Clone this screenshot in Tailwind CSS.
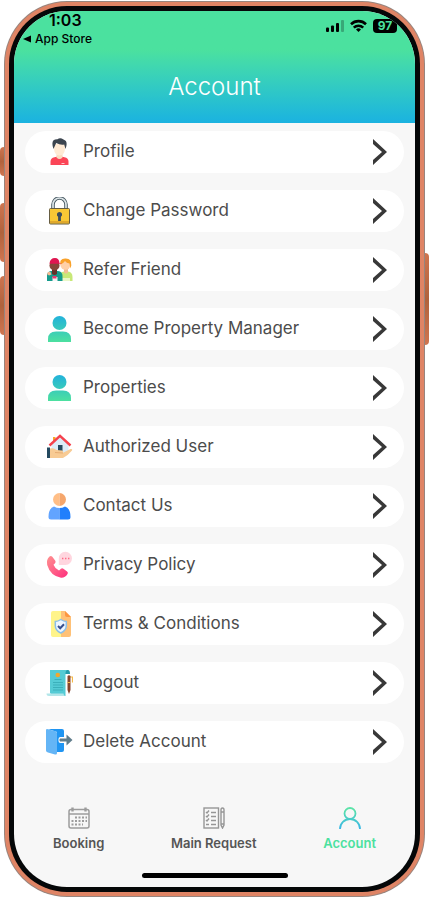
<!DOCTYPE html>
<html lang="en">
<head>
    <meta charset="UTF-8">
    <meta name="viewport" content="width=device-width, initial-scale=1.0" />
    <title>Account</title>
    <script src="https://cdn.jsdelivr.net/npm/@tailwindcss/browser@4"></script>
</head>
<body class="bg-white font-['Inter','Liberation_Sans',sans-serif]">
    <div class="relative min-h-screen flex flex-col pl-1 pr-[5px] py-px">
        <!-- Side buttons -->
        <div class="absolute left-0 top-[147px] w-[5px] h-[29px] rounded-l-sm bg-linear-to-b from-[#cf7550] via-[#b0623c] to-[#cf7550]"></div>
        <div class="absolute left-0 top-[203px] w-[5px] h-[59px] rounded-l-sm bg-linear-to-b from-[#cf7550] via-[#b0623c] to-[#cf7550]"></div>
        <div class="absolute left-0 top-[276px] w-[5px] h-[59px] rounded-l-sm bg-linear-to-b from-[#cf7550] via-[#b0623c] to-[#cf7550]"></div>
        <div class="absolute right-px top-[253px] w-[5px] h-[92px] rounded-r-sm bg-linear-to-b from-[#cf7550] via-[#b0623c] to-[#cf7550]"></div>

        <!-- Phone frame -->
        <div class="relative grow flex flex-col rounded-[63px] bg-[#98857e] p-px">
            <div class="grow flex flex-col rounded-[62px] bg-[#df8465] p-1">
                <div class="grow flex flex-col rounded-[58px] bg-[#050708] p-[5px]">
                    <div class="grow flex flex-col rounded-[53px] overflow-hidden bg-[#f7f7f7]">

                        <header class="bg-linear-to-b from-[#4be19f] from-35% to-[#1bb2e0] pb-5">
                            <div class="flex justify-between">
                                <div class="pl-[9px] text-black">
                                    <div class="pl-[26px] text-base leading-[18px] font-semibold">1:03</div>
                                    <a href="#" class="mt-0.5 flex items-center gap-1 text-xs leading-4 font-medium">
                                        <svg class="w-2 h-2" viewBox="0 0 8 8"><path d="M0 4L8 .5v7z"/></svg>
                                        App Store
                                    </a>
                                </div>
                                <div class="flex items-start gap-1.5 pt-2 pr-[18px]">
                                    <svg class="w-[18px] h-[13px]" viewBox="0 0 18 13">
                                        <rect x="0" y="8.5" width="3" height="4.5" rx="1"/>
                                        <rect x="5" y="6.5" width="3" height="6.5" rx="1"/>
                                        <rect x="10" y="4" width="3" height="9" rx="1"/>
                                        <rect x="15" y="1" width="3" height="12" rx="1" opacity=".25"/>
                                    </svg>
                                    <svg class="w-[17px] h-[13px]" viewBox="0 0 17 13" fill="none" stroke="#000" stroke-width="2.6">
                                        <path d="M1 5.2a10.8 10.8 0 0 1 15 0"/>
                                        <path d="M3.8 8.6a6.8 6.8 0 0 1 9.4 0"/>
                                        <path d="M8.500 13L6 10.500a3.500 3.500 0 0 1 5 0z" fill="#000" stroke="none"/>
                                    </svg>
                                    <div class="w-6 h-[14px] rounded bg-black text-[#4be19f] text-xs leading-[14px] font-bold text-center">97</div>
                                </div>
                            </div>
                            <h1 class="mt-6 text-center text-2xl leading-8 font-light text-white">Account</h1>
                        </header>

                        <main class="px-[11px] pt-2 pb-4">
                            <ul class="flex flex-col gap-[17px] text-[17px] text-[#4c4c4c]">
                                <li>
                                    <a href="#" class="flex items-center gap-2.5 h-[42px] rounded-full bg-white pl-5 pr-[17px]">
                                        <svg class="w-7 h-7" viewBox="0 0 28 28">
                                            <path d="M5.500 27v-3.500q0-3.500 4-4.200l5-1.300 5 1.300q4 .7 4 4.200V27z" fill="#fb4557"/>
                                            <path d="M11.500 15h6v4.500q-3 3-6 0z" fill="#f9dcc0"/>
                                            <path d="M9 6h11v5q-.5 6-5.500 6.500Q9.500 17 9 11z" fill="#ffead4"/>
                                            <path d="M8.500 11Q5 1 12.500 1.300 15-.8 18.500 1.500 23.500 3 20.500 11l-1.300-4.500q-4 .7-8-1.500z" fill="#3c454f"/>
                                            <path d="M16.500 25.500h3" stroke="#ffc5c8"/>
                                        </svg>
                                        <span class="grow">Profile</span>
                                        <svg class="w-[14px] h-[26px]" viewBox="0 0 14 26"><path d="M0 0v5l9 8-9 8v5l14-13z" fill="#383838"/></svg>
                                    </a>
                                </li>
                                <li>
                                    <a href="#" class="flex items-center gap-2.5 h-[42px] rounded-full bg-white pl-5 pr-[17px]">
                                        <svg class="w-7 h-7" viewBox="0 0 28 28">
                                            <path d="M8 12V7.500a6.500 6.500 0 0 1 13 0V12" fill="none" stroke="#4c5d66" stroke-width="3.600"/>
                                            <path d="M8 12V7.500a6.500 6.500 0 0 1 13 0V12" fill="none" stroke="#dce4e7" stroke-width="1.700"/>
                                            <rect x="4.500" y="11.500" width="20" height="15.500" rx="1" fill="#f9c835" stroke="#665d43"/>
                                            <path d="M5 25h19" stroke="#e0a92c" stroke-width="2"/>
                                            <path d="M14.500 15a2.600 2.600 0 0 1 1.400 4.800V24h-2.800v-4.200a2.600 2.600 0 0 1 1.400-4.800z" fill="#3e4e5b"/>
                                        </svg>
                                        <span class="grow">Change Password</span>
                                        <svg class="w-[14px] h-[26px]" viewBox="0 0 14 26"><path d="M0 0v5l9 8-9 8v5l14-13z" fill="#383838"/></svg>
                                    </a>
                                </li>
                                <li>
                                    <a href="#" class="flex items-center gap-2.5 h-[42px] rounded-full bg-white pl-5 pr-[17px]">
                                        <svg class="w-7 h-7" viewBox="0 0 28 28">
                                            <path d="M15 25v-6q0-3 4-3.500h4q4.500.5 4.500 5.500v4z" fill="#c8e878"/>
                                            <path d="M17 22h8v3h-8z" fill="#eaf7c7"/>
                                            <path d="M19 13h4v3.500q-2 2-4 0z" fill="#f3bc93"/>
                                            <circle cx="20.500" cy="8.500" r="5.200" fill="#ffd0a8"/>
                                            <path d="M15.500 8.500Q14 3 20 2.500q7-.5 6.300 7l-1 3-.8-5q-3-.5-4.500-2.500-1.500 2-4.500 3.500z" fill="#f9a22b"/>
                                            <path d="M2 25v-5.500q0-4 4-4.500h7q4.500.5 4.500 5V25z" fill="#159b8c"/>
                                            <path d="M2 18q1-3 3.500-2l1 2.500-2.500 1z" fill="#f6b992"/>
                                            <path d="M7.500 21h5v4h-5z" fill="#f4f4f4"/>
                                            <path d="M7.500 20h4v2.500h-4z" fill="#eb386c"/>
                                            <path d="M7 13h5v5q-2.500 2-5 0z" fill="#653129"/>
                                            <circle cx="9.500" cy="9.500" r="5" fill="#854638"/>
                                            <path d="M4.500 7.500Q5 2 10 2q4 0 4.500 5l2.500.8H4.500z" fill="#df1650"/>
                                        </svg>
                                        <span class="grow">Refer Friend</span>
                                        <svg class="w-[14px] h-[26px]" viewBox="0 0 14 26"><path d="M0 0v5l9 8-9 8v5l14-13z" fill="#383838"/></svg>
                                    </a>
                                </li>
                                <li>
                                    <a href="#" class="flex items-center gap-2.5 h-[42px] rounded-full bg-white pl-5 pr-[17px]">
                                        <svg class="w-7 h-7" viewBox="0 0 28 28">
                                            <defs>
                                                <linearGradient id="userFill" gradientUnits="userSpaceOnUse" x1="0" y1="1" x2="0" y2="27">
                                                    <stop offset="0" stop-color="#22b2db"/>
                                                    <stop offset="1" stop-color="#4de09f"/>
                                                </linearGradient>
                                            </defs>
                                            <circle cx="14.500" cy="8" r="7" fill="url(#userFill)"/>
                                            <path d="M3 27v-3q0-7.500 8-7.500h7q8 0 8 7.500v3z" fill="url(#userFill)"/>
                                        </svg>
                                        <span class="grow">Become Property Manager</span>
                                        <svg class="w-[14px] h-[26px]" viewBox="0 0 14 26"><path d="M0 0v5l9 8-9 8v5l14-13z" fill="#383838"/></svg>
                                    </a>
                                </li>
                                <li>
                                    <a href="#" class="flex items-center gap-2.5 h-[42px] rounded-full bg-white pl-5 pr-[17px]">
                                        <svg class="w-7 h-7" viewBox="0 0 28 28">
                                            <circle cx="14.500" cy="8" r="7" fill="url(#userFill)"/>
                                            <path d="M3 27v-3q0-7.500 8-7.500h7q8 0 8 7.500v3z" fill="url(#userFill)"/>
                                        </svg>
                                        <span class="grow">Properties</span>
                                        <svg class="w-[14px] h-[26px]" viewBox="0 0 14 26"><path d="M0 0v5l9 8-9 8v5l14-13z" fill="#383838"/></svg>
                                    </a>
                                </li>
                                <li>
                                    <a href="#" class="flex items-center gap-2.5 h-[42px] rounded-full bg-white pl-5 pr-[17px]">
                                        <svg class="w-7 h-7" viewBox="0 0 28 28">
                                            <path d="M8 4h2.500v6H8z" fill="#f6a928"/>
                                            <path d="M6.500 11.500L15 3.500l8.500 8V21h-17z" fill="#dcecf8"/>
                                            <path d="M13 12h4.500v6H13z" fill="#264a5f"/>
                                            <path d="M4.500 12.500L15 2.800l10.500 9.700" fill="none" stroke="#f5424d" stroke-width="2.400"/>
                                            <path d="M5 15.500q4-1 6.500 1.500l6 .5q1.500 1.500 0 2.500l8-4q2.500-.5 1.500 1.500-4 5-9 7.500H5z" fill="#f8cb94"/>
                                            <path d="M10 19.500l8 .5" stroke="#e7ad73"/>
                                            <path d="M2 14.500h3V25H2z" fill="#24495f"/>
                                        </svg>
                                        <span class="grow">Authorized User</span>
                                        <svg class="w-[14px] h-[26px]" viewBox="0 0 14 26"><path d="M0 0v5l9 8-9 8v5l14-13z" fill="#383838"/></svg>
                                    </a>
                                </li>
                                <li>
                                    <a href="#" class="flex items-center gap-2.5 h-[42px] rounded-full bg-white pl-5 pr-[17px]">
                                        <svg class="w-7 h-7" viewBox="0 0 28 28">
                                            <path d="M14.500 1a6.500 6.500 0 0 0 0 13z" fill="#ffbe86"/>
                                            <path d="M14.500 1a6.500 6.500 0 0 1 0 13z" fill="#f5a66c"/>
                                            <path d="M9 14.500q2.500 1.500 5.500 1.500v11.500H6q-2.500 0-2.500-2.500 0-8.500 5.500-10.500z" fill="#62a4ff"/>
                                            <path d="M20 14.500q-2.500 1.500-5.500 1.500v11.500H23q2.500 0 2.500-2.500 0-8.500-5.500-10.500z" fill="#217ffc"/>
                                        </svg>
                                        <span class="grow">Contact Us</span>
                                        <svg class="w-[14px] h-[26px]" viewBox="0 0 14 26"><path d="M0 0v5l9 8-9 8v5l14-13z" fill="#383838"/></svg>
                                    </a>
                                </li>
                                <li>
                                    <a href="#" class="flex items-center gap-2.5 h-[42px] rounded-full bg-white pl-5 pr-[17px]">
                                        <svg class="w-7 h-7" viewBox="0 0 28 28">
                                            <defs>
                                                <linearGradient id="phoneFill" x1="0" y1="0" x2="1" y2="1">
                                                    <stop offset="0" stop-color="#ff9290"/>
                                                    <stop offset="1" stop-color="#fe2f7e"/>
                                                </linearGradient>
                                            </defs>
                                            <path d="M13.800 14V7.500A6.600 6.600 0 1 1 20.500 14z" fill="#ffd6df"/>
                                            <path d="M17 7.500h1.400M20 7.500h1.400M23 7.500h1.400" stroke="#ff6b86" stroke-width="1.400"/>
                                            <path d="M4.500 5.500q1.500-1.200 2.800.3l3 4q.8 1.300-.3 2.400l-1.500 1.600q1.500 4 5.500 5.700l2-1.700q1.100-.9 2.400 0l3.700 2.700q1.400 1.200.4 2.500-2.500 4-6.500 3.700Q5.500 25 2.200 14 1 8.500 4.500 5.500z" fill="url(#phoneFill)"/>
                                        </svg>
                                        <span class="grow">Privacy Policy</span>
                                        <svg class="w-[14px] h-[26px]" viewBox="0 0 14 26"><path d="M0 0v5l9 8-9 8v5l14-13z" fill="#383838"/></svg>
                                    </a>
                                </li>
                                <li>
                                    <a href="#" class="flex items-center gap-2.5 h-[42px] rounded-full bg-white pl-5 pr-[17px]">
                                        <svg class="w-7 h-7" viewBox="0 0 28 28">
                                            <path d="M8 1h8v26H8q-2 0-2-2V3q0-2 2-2z" fill="#fff48b"/>
                                            <path d="M16 1h4l6 6v18q0 2-2 2h-8z" fill="#ffc177"/>
                                            <path d="M20 1l6 6h-4q-2 0-2-2z" fill="#fd9641"/>
                                            <path d="M15.800 9.500q3 2 5.500 2v4q0 5-5.500 7.500-5.500-2.500-5.500-7.500v-4q2.500 0 5.500-2z" fill="#eef6ff" stroke="#8bbfe9" stroke-width="1.500"/>
                                            <path d="M13 16l2.200 2.200 3.800-4" fill="none" stroke="#38508f" stroke-width="2"/>
                                        </svg>
                                        <span class="grow">Terms &amp; Conditions</span>
                                        <svg class="w-[14px] h-[26px]" viewBox="0 0 14 26"><path d="M0 0v5l9 8-9 8v5l14-13z" fill="#383838"/></svg>
                                    </a>
                                </li>
                                <li>
                                    <a href="#" class="flex items-center gap-2.5 h-[42px] rounded-full bg-white pl-5 pr-[17px]">
                                        <svg class="w-7 h-7" viewBox="0 0 28 28">
                                            <path d="M19 1h4q2 0 2 4h-6z" fill="#269dad"/>
                                            <path d="M5 1h17q-1.500 1-1.500 3v23H8l-3-3z" fill="#55cbd5"/>
                                            <path d="M1.500 24.500h17q0 2 2 2.500H4q-2.500 0-2.500-2.500z" fill="#b2e6e9"/>
                                            <circle cx="12.800" cy="6" r="2.300" fill="#f2a72d"/>
                                            <path d="M9.500 10.500h7M8 13.500h10M8 16h10M8 18.500h10M8 21h10" stroke="#35a8b4" stroke-width=".8"/>
                                            <path d="M24.500 8h3v5.500" fill="none" stroke="#f5b847" stroke-width="1.200"/>
                                            <path d="M22.500 7q1.500-1.500 3 0v14l-1.500 4-1.500-4z" fill="#87452d"/>
                                            <path d="M22.500 13.500h3" stroke="#f5b847"/>
                                        </svg>
                                        <span class="grow">Logout</span>
                                        <svg class="w-[14px] h-[26px]" viewBox="0 0 14 26"><path d="M0 0v5l9 8-9 8v5l14-13z" fill="#383838"/></svg>
                                    </a>
                                </li>
                                <li>
                                    <a href="#" class="flex items-center gap-2.5 h-[42px] rounded-full bg-white pl-5 pr-[17px]">
                                        <svg class="w-7 h-7" viewBox="0 0 28 28">
                                            <path d="M3 1h14q2 0 2 2v19q0 2-2 2h-5V4z" fill="#2095f2"/>
                                            <path d="M1 2q0-1.200 2-.8l7.500 2Q12 3.600 12 5v20q0 2-2 1.400l-7-2Q1 24 1 22.500z" fill="#64b5f6"/>
                                            <path d="M15.500 11h6V7.500l5 4.500-5 4.500V13h-6z" fill="#fff" stroke="#fff" stroke-width="4" stroke-linejoin="round"/>
                                            <path d="M15 10.500h6.500V6.500l6 5.500-6 5.500v-4H15q-1.500-1.500 0-3z" fill="#607d8b"/>
                                        </svg>
                                        <span class="grow">Delete Account</span>
                                        <svg class="w-[14px] h-[26px]" viewBox="0 0 14 26"><path d="M0 0v5l9 8-9 8v5l14-13z" fill="#383838"/></svg>
                                    </a>
                                </li>
                            </ul>
                        </main>

                        <nav class="mt-auto flex justify-between px-[39px] text-[13px] leading-4 font-semibold text-[#555555]">
                            <a href="#" class="flex flex-col items-center gap-1.5">
                                <svg class="w-[22px] h-[22px]" viewBox="0 0 22 22" fill="none" stroke="#9c9c9c" stroke-width="1.500">
                                    <rect x="1" y="2.500" width="20" height="18.500" rx="2"/>
                                    <path d="M1 7h20"/>
                                    <path d="M4.500 .5v4M17.500 .5v4" stroke-width="2.400"/>
                                    <path d="M7 10.500h12M3.500 14h15.500M3.500 17.500h11.500" stroke-width="2" stroke-dasharray="2 1.500"/>
                                </svg>
                                Booking
                            </a>
                            <a href="#" class="flex flex-col items-center gap-1.5">
                                <svg class="w-[22px] h-[22px]" viewBox="0 0 22 22" fill="none" stroke="#969696" stroke-width="1.400">
                                    <rect x="1" y="1" width="14.500" height="20"/>
                                    <path d="M3 5l1 1 2-2.500M3 9l1 1 2-2.500M3 13l1 1 2-2.500M8 5.500h5M8 9.500h5M8 13.500h5M3 17.500h3M8 17.500h5"/>
                                    <path d="M18 3q0-2 1.500-2T21 3v15l-1.500 3-1.500-3zM18 5h3M18 17h3"/>
                                </svg>
                                Main Request
                            </a>
                            <a href="#" class="flex flex-col items-center gap-1.5 text-[#4be19f]">
                                <svg class="w-[22px] h-[22px]" viewBox="0 0 22 22" fill="none" stroke="url(#navUser)" stroke-width="1.800">
                                    <defs>
                                        <linearGradient id="navUser" gradientUnits="userSpaceOnUse" x1="0" y1="2" x2="0" y2="21">
                                            <stop offset="0" stop-color="#5be3a8"/>
                                            <stop offset="1" stop-color="#3ab8e4"/>
                                        </linearGradient>
                                    </defs>
                                    <circle cx="11" cy="6.500" r="5.500"/>
                                    <path d="M1 22a10 10 0 0 1 20 0"/>
                                </svg>
                                Account
                            </a>
                        </nav>
                        <div class="mx-auto mt-[22px] mb-[9px] w-[146px] h-[5px] rounded-full bg-black"></div>
                    </div>
                </div>
            </div>
        </div>
    </div>
</body>
</html>
